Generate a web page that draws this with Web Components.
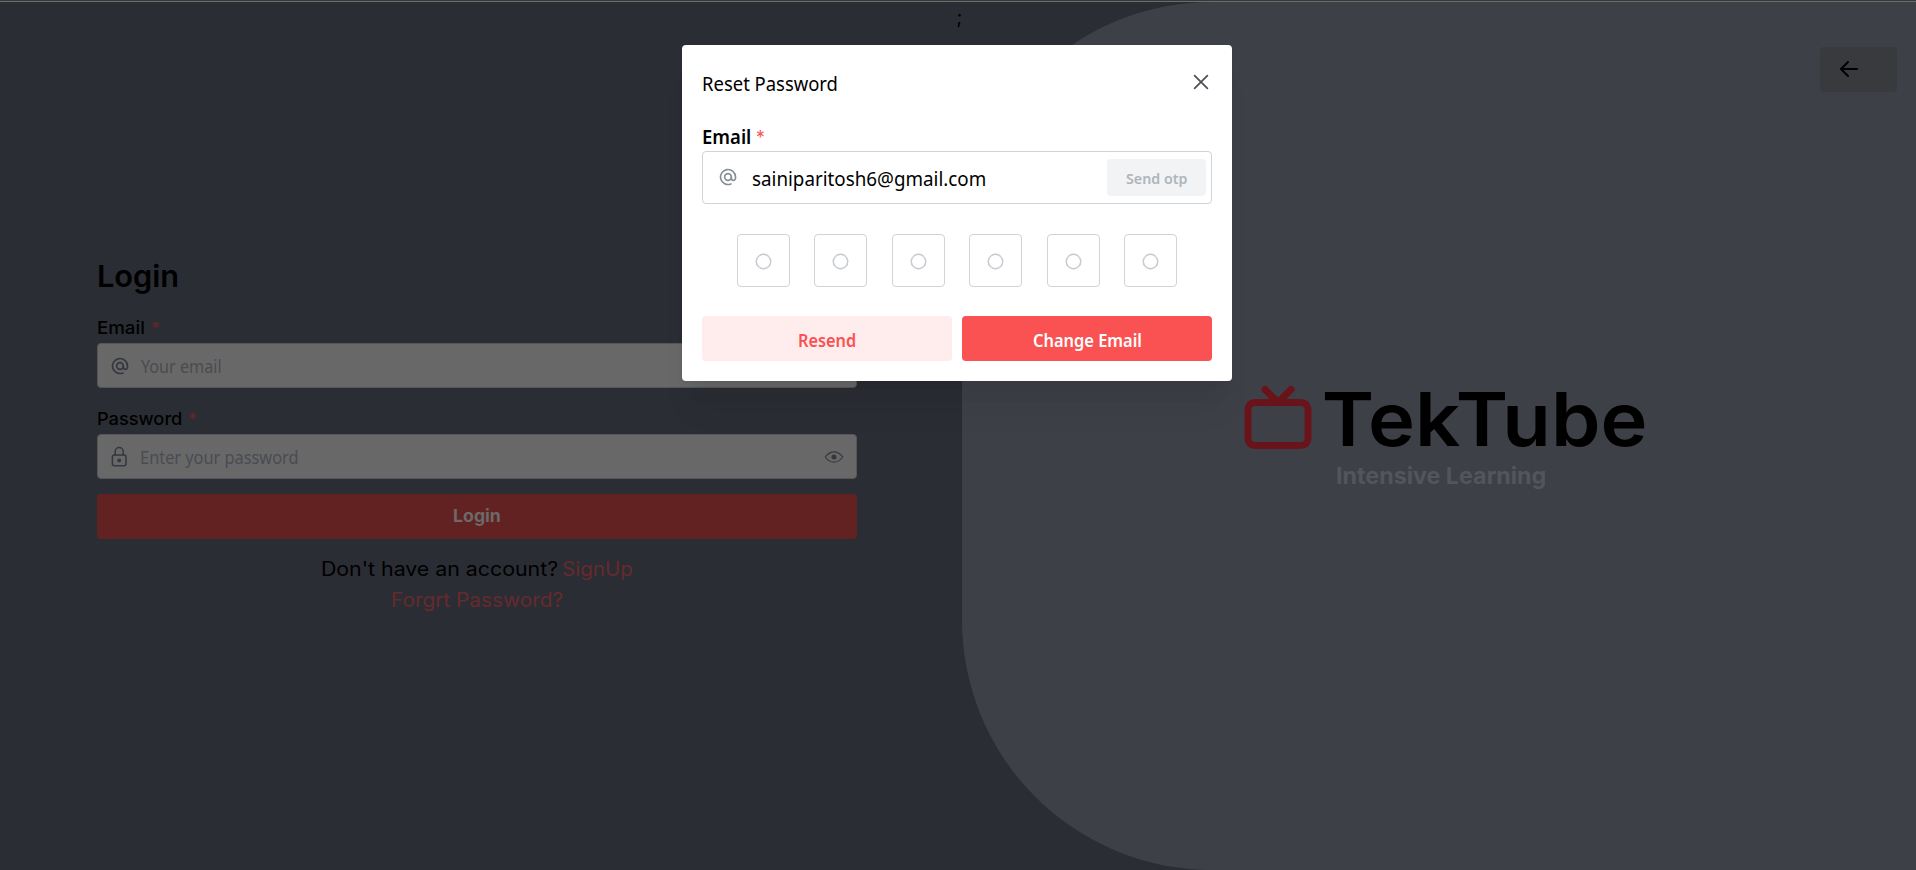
<!DOCTYPE html>
<html lang="en">
<head>
<meta charset="utf-8">
<title>TekTube</title>
<style>
html,body{margin:0;height:100%;overflow:hidden;background:#2b2d34;font-family:Inter,"Noto Sans",sans-serif}
</style>
</head>
<body>
<tek-app></tek-app>
<script>
const define = (name, html, setup) => customElements.define(name, class extends HTMLElement {
  connectedCallback() {
    if (this.shadowRoot) return;
    const t = document.createElement('template');
    t.innerHTML = html;
    this.attachShadow({ mode: 'open' }).appendChild(t.content.cloneNode(true));
    if (setup) setup.call(this, this.shadowRoot);
  }
});

// One line of text whose drawn glyphs span exactly the given width.
customElements.define('fit-text', class extends HTMLElement {
  connectedCallback() {
    if (this.shadowRoot) return;
    const w = +this.getAttribute('w'), size = this.getAttribute('size'),
      weight = this.getAttribute('weight') || 400, face = this.getAttribute('face') || 'Inter',
      line = this.getAttribute('line') || 28;
    const c = document.createElement('canvas').getContext('2d');
    c.font = `${weight} ${size}px "${face}"`;
    const m = c.measureText(this.textContent);
    const s = w / (m.actualBoundingBoxLeft + m.actualBoundingBoxRight);
    this.attachShadow({ mode: 'open' }).innerHTML = `<style>
      :host{display:block;flex:none;width:${w}px;height:${line}px;white-space:nowrap}
      span{display:inline-block;vertical-align:top;font:${weight} ${size}px/${line}px "${face}",sans-serif;
        transform-origin:0 0;transform:translateX(${m.actualBoundingBoxLeft * s}px) scaleX(${s})}
    </style><span><slot></slot></span>`;
  }
});

const icons = {
  at: '<svg width="20" height="20" viewBox="0 0 24 24"><circle cx="12" cy="12" r="4"/><path d="M16 12v1.5a2.5 2.5 0 0 0 5 0V12a9 9 0 1 0-5.5 8.28"/></svg>',
  lock: '<svg width="20" height="24" viewBox="0 0 20 24" style="stroke-width:1.5"><rect x="2.4" y="10" width="13.6" height="10.8" rx="2"/><path d="M5.200 10V6.500a4 4 0 0 1 8 0V10"/><circle cx="9.200" cy="15.400" r="1.200" fill="currentColor"/></svg>',
  eye: '<svg width="20" height="20" viewBox="0 0 20 20" style="stroke-width:1.2"><path d="M1.2 10Q5.2 4.8 10 4.8T18.8 10Q14.800 15.200 10 15.200T1.200 10Z"/><circle cx="10" cy="10" r="2" fill="currentColor"/></svg>',
  close: '<svg width="14" height="14" viewBox="0 0 14 14"><path d="M.6.6l12.800 12.800M13.400.6L.6 13.400" stroke-width="1.700"/></svg>',
  back: '<svg width="20" height="18" viewBox="0 0 20 18"><path d="M18 9H2.200M9 2L2 9l7 7" stroke-width="2"/></svg>',
  tv: '<svg width="68" height="64" viewBox="0 0 68 64"><rect x="4" y="16.500" width="60" height="43" rx="7" stroke-width="7"/><path d="M21 3.500l13 13 13-13" stroke-width="7"/></svg>'
};
define('tek-icon', `<style>:host{display:block;flex:none}svg{display:block;overflow:visible;fill:none;stroke:currentColor;stroke-width:2;stroke-linecap:round;stroke-linejoin:round}</style>`,
  function (r) { r.innerHTML += icons[this.getAttribute('name')]; });

define('field-label', `<style>:host{display:flex;height:28px;gap:7px}.s{color:var(--star,#662528)}</style><slot></slot><fit-text class="s" w="7.500" size="18.500">*</fit-text>`);

define('text-field', `<style>
:host{display:flex;align-items:center;box-sizing:border-box;height:45px;border:1px solid #53565a;border-radius:4px;background:#686868;color:#484c51;padding:0 12px 0 12px}
::slotted([slot=icon]){margin-right:11px;color:#34383d}::slotted([slot=end]){margin-left:auto;color:#34383d}
</style><slot name="icon"></slot><slot></slot><slot name="end"></slot>`);

define('tek-button', `<style>:host{display:flex;align-items:center;justify-content:center;box-sizing:border-box;height:45px;border-radius:4px}</style><slot></slot>`);

define('login-form', `<style>
:host{display:flex;flex-direction:column;box-sizing:border-box;width:962px;padding:254px 105px 0 97px}
h1{margin:0 0 18px 1.500px;font-weight:inherit;font-size:inherit}
field-label{margin-left:1px}
text-field{margin:1px 0 17px}text-field.p{margin-bottom:15px}
.go{background:#632222;color:#6b6969;margin-bottom:15px}
.go fit-text{margin-top:-1px}
.r{display:flex;justify-content:center;gap:6px;height:31px}.l{color:#662a2e}
</style>
<h1><fit-text w="78.500" size="30.500" weight="600" line="40">Login</fit-text></h1>
<field-label><fit-text w="46.500" size="17.500" weight="500">Email</fit-text></field-label>
<text-field><tek-icon slot="icon" name="at"></tek-icon><fit-text w="80" size="18" face="Noto Sans">Your email</fit-text></text-field>
<field-label><fit-text w="83.500" size="17.500" weight="500">Password</fit-text></field-label>
<text-field class="p"><tek-icon slot="icon" name="lock"></tek-icon><fit-text w="156.500" size="18" face="Noto Sans">Enter your password</fit-text><tek-icon slot="end" name="eye"></tek-icon></text-field>
<tek-button class="go"><fit-text w="46" size="17.500" weight="700">Login</fit-text></tek-button>
<div class="r"><fit-text w="235" size="19.500" line="31">Don't have an account?</fit-text><fit-text class="l" w="69" size="19.500" line="31">SignUp</fit-text></div>
<div class="r l"><fit-text w="170" size="19.500" line="31">Forgrt Password?</fit-text></div>`);

define('brand-panel', `<style>
:host{display:flex;flex-direction:column;align-items:center;box-sizing:border-box;width:954px;height:868px;background:#3e4047;border-radius:250px 0 0 250px}
.b{align-self:flex-end;justify-content:flex-start;width:77px;margin:45px 19px 0 0;padding-left:19px;background:#383a3e;color:#000}
.b tek-icon{margin-top:-1px}
.n{display:flex;gap:12.500px;margin-top:276px;height:92px;margin-left:10px}
.n tek-icon{color:#68141a;margin-top:18px}
.n fit-text{margin-top:1px}
.t{color:#54555a;margin-left:4px}
</style>
<tek-button class="b"><tek-icon name="back"></tek-icon></tek-button>
<div class="n"><tek-icon name="tv"></tek-icon><fit-text w="320.500" size="74" weight="600" line="100">TekTube</fit-text></div>
<fit-text class="t" w="208" size="22.500" weight="700" line="32">Intensive Learning</fit-text>`);

define('pin-input', `<style>
:host{display:flex;justify-content:space-between;width:441px;margin:0 auto}
i{display:flex;align-items:center;justify-content:center;box-sizing:border-box;width:53px;height:53px;border:1px solid #ced4da;border-radius:4px}
i::after{content:"";box-sizing:border-box;width:15px;height:15px;margin-top:2px;border:1.500px solid #b8bec6;border-radius:50%;box-shadow:0 0 0 .4px #b8bec6}
</style><i></i><i></i><i></i><i></i><i></i><i></i>`);

define('reset-dialog', `<style>
:host{display:block;box-sizing:border-box;width:550px;height:336px;padding:20px;border-radius:4px;background:#fff;color:#000;--star:#fa5252;
box-shadow:0 1px 3px rgba(0,0,0,.05),0 36px 28px -7px rgba(0,0,0,.05),0 17px 17px -7px rgba(0,0,0,.04)}
header{display:flex;justify-content:space-between;height:58px}
header fit-text{margin:5px 0 0 1px}header tek-icon{margin:10px 4px 0 0;color:#495057}
field-label{margin-left:1px}
text-field{height:53px;background:#fff;color:#000;border-color:#ced4da;padding:0 5px 0 15px;margin-bottom:30px}
text-field tek-icon{color:#868e96!important;margin-right:15px!important;margin-top:-1px}
text-field>fit-text{margin-top:3px}
.o{margin-left:auto;width:99px;height:37px;background:#f1f3f5;color:#adb5bd!important}
.f{display:flex;gap:10px;margin-top:29px}.f tek-button{flex:1}
.f fit-text{margin-top:2px}
.a{background:#ffecec;color:#fa5252}.c{background:#fa5252;color:#fff}
</style>
<header><fit-text w="134" size="19.500" face="Noto Sans">Reset Password</fit-text><tek-icon name="close"></tek-icon></header>
<field-label><fit-text w="47" size="19" weight="600" face="Noto Sans">Email</fit-text></field-label>
<text-field><tek-icon slot="icon" name="at"></tek-icon><fit-text w="232" size="19.500" face="Noto Sans">sainiparitosh6@gmail.com</fit-text><tek-button class="o" slot="end"><fit-text w="61" size="15" weight="600" face="Noto Sans">Send otp</fit-text></tek-button></text-field>
<pin-input></pin-input>
<div class="f"><tek-button class="a"><fit-text w="56" size="18" weight="600" face="Noto Sans">Resend</fit-text></tek-button><tek-button class="c"><fit-text w="107" size="18" weight="600" face="Noto Sans">Change Email</fit-text></tek-button></div>`);

define('tek-app', `<style>
:host{display:block;position:relative;width:1916px;height:870px;overflow:hidden;color:#000;background:#2b2d34}
.line{height:1px;border-top:1px solid #37383c;background:#6b6b69}
.page{display:flex;height:868px}
.semi{position:absolute;left:957.500px;top:4px}
reset-dialog{position:absolute;left:682px;top:45px}
</style>
<div class="line"></div>
<div class="page"><login-form></login-form><brand-panel></brand-panel></div>
<fit-text class="semi" w="4" size="19" line="28">;</fit-text>
<reset-dialog></reset-dialog>`);
</script>
</body>
</html>
